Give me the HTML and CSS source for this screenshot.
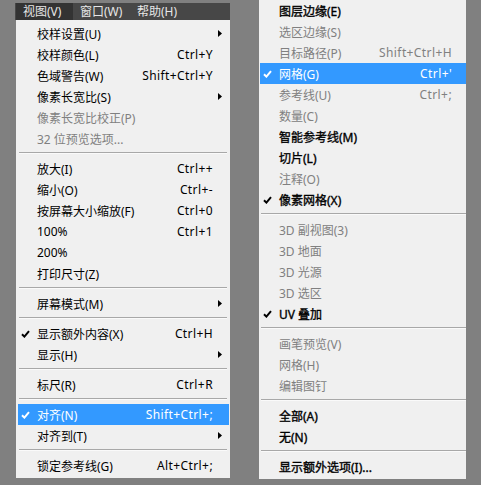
FILE: index.html
```html
<!DOCTYPE html>
<html lang="zh-CN">
<head>
<meta charset="utf-8">
<title>视图菜单</title>
<link rel="stylesheet" href="styles.css">
</head>
<body>
<div class="left-group">
  <div class="menubar">
    <span class="mtitle active">视图(V)</span>
    <span class="mtitle">窗口(W)</span>
    <span class="mtitle">帮助(H)</span>
  </div>
  <div class="menu menu-left">
    <div class="item"><span class="ck"></span><span class="label">校样设置(U)</span><span class="sub"><svg width="4" height="7" viewBox="0 0 4 7"><polygon points="0,0 4,3.5 0,7"/></svg></span></div>
    <div class="item"><span class="ck"></span><span class="label">校样颜色(L)</span><span class="key">Ctrl+Y</span><span class="sub"></span></div>
    <div class="item"><span class="ck"></span><span class="label">色域警告(W)</span><span class="key">Shift+Ctrl+Y</span><span class="sub"></span></div>
    <div class="item"><span class="ck"></span><span class="label">像素长宽比(S)</span><span class="sub"><svg width="4" height="7" viewBox="0 0 4 7"><polygon points="0,0 4,3.5 0,7"/></svg></span></div>
    <div class="item dis"><span class="ck"></span><span class="label">像素长宽比校正(P)</span><span class="sub"></span></div>
    <div class="item dis"><span class="ck"></span><span class="label">32 位预览选项...</span><span class="sub"></span></div>
    <div class="sep"></div>
    <div class="item"><span class="ck"></span><span class="label">放大(I)</span><span class="key">Ctrl++</span><span class="sub"></span></div>
    <div class="item"><span class="ck"></span><span class="label">缩小(O)</span><span class="key">Ctrl+-</span><span class="sub"></span></div>
    <div class="item"><span class="ck"></span><span class="label">按屏幕大小缩放(F)</span><span class="key">Ctrl+0</span><span class="sub"></span></div>
    <div class="item"><span class="ck"></span><span class="label">100%</span><span class="key">Ctrl+1</span><span class="sub"></span></div>
    <div class="item"><span class="ck"></span><span class="label">200%</span><span class="sub"></span></div>
    <div class="item"><span class="ck"></span><span class="label">打印尺寸(Z)</span><span class="sub"></span></div>
    <div class="sep"></div>
    <div class="item"><span class="ck"></span><span class="label">屏幕模式(M)</span><span class="sub"><svg width="4" height="7" viewBox="0 0 4 7"><polygon points="0,0 4,3.5 0,7"/></svg></span></div>
    <div class="sep"></div>
    <div class="item"><span class="ck"><svg width="9" height="8" viewBox="0 0 9 8"><path d="M1 4.2 L3.4 6.6 L8 1.2"/></svg></span><span class="label">显示额外内容(X)</span><span class="key">Ctrl+H</span><span class="sub"></span></div>
    <div class="item"><span class="ck"></span><span class="label">显示(H)</span><span class="sub"><svg width="4" height="7" viewBox="0 0 4 7"><polygon points="0,0 4,3.5 0,7"/></svg></span></div>
    <div class="sep"></div>
    <div class="item"><span class="ck"></span><span class="label">标尺(R)</span><span class="key">Ctrl+R</span><span class="sub"></span></div>
    <div class="sep"></div>
    <div class="item hl"><span class="ck"><svg width="9" height="8" viewBox="0 0 9 8"><path d="M1 4.2 L3.4 6.6 L8 1.2"/></svg></span><span class="label">对齐(N)</span><span class="key">Shift+Ctrl+;</span><span class="sub"></span></div>
    <div class="item"><span class="ck"></span><span class="label">对齐到(T)</span><span class="sub"><svg width="4" height="7" viewBox="0 0 4 7"><polygon points="0,0 4,3.5 0,7"/></svg></span></div>
    <div class="sep"></div>
    <div class="item"><span class="ck"></span><span class="label">锁定参考线(G)</span><span class="key">Alt+Ctrl+;</span><span class="sub"></span></div>
  </div>
</div>
<div class="menu menu-right">
  <div class="item b"><span class="ck"></span><span class="label">图层边缘(E)</span><span class="sub"></span></div>
  <div class="item dis"><span class="ck"></span><span class="label">选区边缘(S)</span><span class="sub"></span></div>
  <div class="item dis"><span class="ck"></span><span class="label">目标路径(P)</span><span class="key">Shift+Ctrl+H</span><span class="sub"></span></div>
  <div class="item hl"><span class="ck"><svg width="9" height="8" viewBox="0 0 9 8"><path d="M1 4.2 L3.4 6.6 L8 1.2"/></svg></span><span class="label">网格(G)</span><span class="key">Ctrl+'</span><span class="sub"></span></div>
  <div class="item dis"><span class="ck"></span><span class="label">参考线(U)</span><span class="key">Ctrl+;</span><span class="sub"></span></div>
  <div class="item dis"><span class="ck"></span><span class="label">数量(C)</span><span class="sub"></span></div>
  <div class="item b"><span class="ck"></span><span class="label">智能参考线(M)</span><span class="sub"></span></div>
  <div class="item b"><span class="ck"></span><span class="label">切片(L)</span><span class="sub"></span></div>
  <div class="item dis"><span class="ck"></span><span class="label">注释(O)</span><span class="sub"></span></div>
  <div class="item b"><span class="ck"><svg width="9" height="8" viewBox="0 0 9 8"><path d="M1 4.2 L3.4 6.6 L8 1.2"/></svg></span><span class="label">像素网格(X)</span><span class="sub"></span></div>
  <div class="sep"></div>
  <div class="item dis"><span class="ck"></span><span class="label">3D 副视图(3)</span><span class="sub"></span></div>
  <div class="item dis"><span class="ck"></span><span class="label">3D 地面</span><span class="sub"></span></div>
  <div class="item dis"><span class="ck"></span><span class="label">3D 光源</span><span class="sub"></span></div>
  <div class="item dis"><span class="ck"></span><span class="label">3D 选区</span><span class="sub"></span></div>
  <div class="item b"><span class="ck"><svg width="9" height="8" viewBox="0 0 9 8"><path d="M1 4.2 L3.4 6.6 L8 1.2"/></svg></span><span class="label">UV 叠加</span><span class="sub"></span></div>
  <div class="sep"></div>
  <div class="item dis"><span class="ck"></span><span class="label">画笔预览(V)</span><span class="sub"></span></div>
  <div class="item dis"><span class="ck"></span><span class="label">网格(H)</span><span class="sub"></span></div>
  <div class="item dis"><span class="ck"></span><span class="label">编辑图钉</span><span class="sub"></span></div>
  <div class="sep"></div>
  <div class="item b"><span class="ck"></span><span class="label">全部(A)</span><span class="sub"></span></div>
  <div class="item b"><span class="ck"></span><span class="label">无(N)</span><span class="sub"></span></div>
  <div class="sep"></div>
  <div class="item b"><span class="ck"></span><span class="label">显示额外选项(I)...</span><span class="sub"></span></div>
</div>
</body>
</html>
```
FILE: styles.css
```css
html, body {
  margin: 0;
  padding: 0;
}
body {
  width: 481px;
  height: 485px;
  background: #808080;
  display: flex;
  align-items: flex-start;
  font-family: "Noto Sans", "Noto Sans CJK SC", sans-serif;
  font-size: 12px;
  color: #000;
  overflow: hidden;
}
.left-group {
  margin-left: 15px;
  margin-top: 3px;
  display: flex;
  flex-direction: column;
}
.menubar {
  width: 214px;
  height: 17px;
  padding-left: 1px;
  background: #474747;
  display: flex;
}
.mtitle {
  display: flex;
  align-items: center;
  width: 57px;
  box-sizing: border-box;
  padding-left: 7px;
  color: #e6e6e6;
  line-height: 17px;
  white-space: nowrap;
}
.mtitle.active {
  background: #333333;
}
.menu {
  background: #f0f0f0;
  display: flex;
  flex-direction: column;
}
.menu-left {
  margin-left: 1px;
  width: 211px;
  padding: 3px 1px 2px 2px;
}
.menu-right {
  margin-left: 29px;
  width: 206px;
  padding: 0 0 2px 1px;
}
.item {
  height: 21px;
  display: flex;
  align-items: center;
  padding-left: 3px;
  white-space: nowrap;
}
.ck {
  width: 16px;
  height: 21px;
  display: flex;
  align-items: center;
}
.ck svg {
  fill: none;
  stroke: #000;
  stroke-width: 2;
}
.label {
  flex: 1;
}
.key {
  text-align: right;
  letter-spacing: 0.4px;
}
.sub {
  width: 16px;
  height: 21px;
  display: flex;
  align-items: center;
  padding-left: 5px;
  box-sizing: border-box;
}
.sub svg {
  fill: #000;
}
.menu-right .sub {
  width: 14px;
}
.dis {
  color: #808080;
}
.b .label {
  font-weight: normal;
  -webkit-text-stroke: 0.35px #000;
}
.hl {
  background: #3399ff;
  color: #fff;
}
.hl .ck svg {
  stroke: #fff;
}
.sep {
  height: 1px;
  margin: 3px 2px 4px 1px;
  background: #a8a8a8;
  border-bottom: 1px solid #fafafa;
}
.menu-right .sep {
  margin: 3px 0 4px 1px;
}
```
